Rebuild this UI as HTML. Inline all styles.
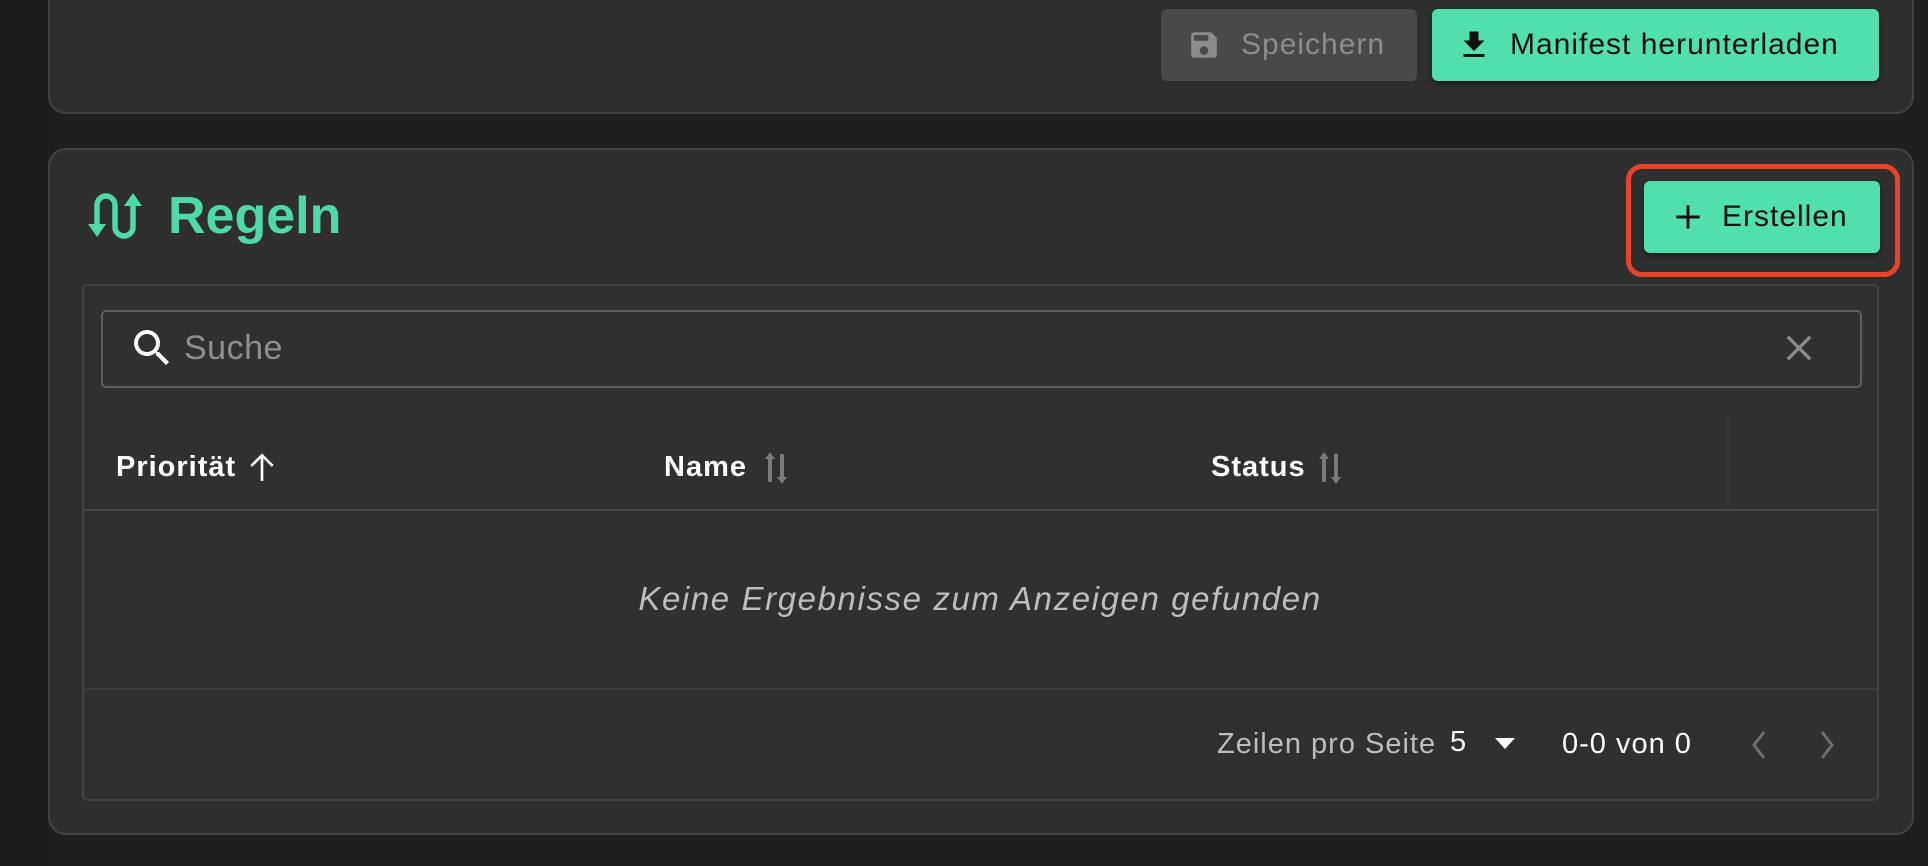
<!DOCTYPE html>
<html><head><meta charset="utf-8"><style>
*{margin:0;padding:0;box-sizing:border-box}
body{width:1928px;height:866px;background:#1f1f1f;font-family:"Liberation Sans",sans-serif;position:relative;overflow:hidden}
.abs{position:absolute}
.card{position:absolute;left:48px;width:1866px;background:#2f2f2f;border:2px solid #424242;border-radius:18px}
.btn{position:absolute;border-radius:6px;display:flex;align-items:center;font-size:30px;letter-spacing:1px}
.t{position:absolute;white-space:nowrap}
</style></head><body>
<div class="abs" style="left:0;top:0;width:48px;height:866px;background:#1b1b1b"></div>
<div class="card" style="top:-30px;height:144px"></div>
<div class="btn" style="left:1161px;top:9px;width:256px;height:72px;background:#494949;color:#8c8c8c">
 <svg style="margin-left:26px" width="34" height="36" viewBox="0 0 24 24"><path fill="#8c8c8c" d="M17 3H5a2 2 0 0 0-2 2v14a2 2 0 0 0 2 2h14a2 2 0 0 0 2-2V7l-4-4zm-5 16a3 3 0 1 1 0-6 3 3 0 0 1 0 6zm3-10H5V5h10v4z"/></svg>
 <span style="margin-left:20px">Speichern</span></div>
<div class="btn" style="left:1432px;top:9px;width:447px;height:72px;background:#50dfad;color:#111;box-shadow:0 3px 6px rgba(0,0,0,.4)">
 <svg style="margin-left:24px" width="36" height="38" viewBox="0 0 24 24"><path fill="#111" d="M19 9h-4V3H9v6H5l7 7 7-7zM5 18v2h14v-2H5z"/></svg>
 <span style="margin-left:18px">Manifest herunterladen</span></div>

<div class="card" style="top:148px;height:687px"></div>
<svg class="abs" style="left:88px;top:191px" width="58" height="50" viewBox="0 0 58 50">
 <g fill="none" stroke="#4fd8a8" stroke-width="5.5" stroke-linecap="round">
  <path d="M9 40V14a9 9 0 0 1 18 0v22a9 9 0 0 0 18 0V10"/>
 </g>
 <path fill="#4fd8a8" d="M0 33h18l-9 13z M36 15h18l-9-13z"/>
</svg>
<div class="t" style="left:168px;top:186px;font-size:52px;font-weight:bold;color:#4fd8a8">Regeln</div>

<div class="abs" style="left:1626px;top:164px;width:274px;height:113px;border:5px solid #e8432a;border-radius:16px"></div>
<div class="btn" style="left:1644px;top:181px;width:236px;height:72px;background:#50dfad;color:#111;box-shadow:0 3px 6px rgba(0,0,0,.4)">
 <svg style="margin-left:30px" width="28" height="28" viewBox="0 0 24 24"><path fill="none" stroke="#111" stroke-width="2.5" d="M12 2v20M2 12h20"/></svg>
 <span style="margin-left:20px">Erstellen</span></div>

<div class="abs" style="left:82px;top:284px;width:1797px;height:517px;background:#303030;border:2px solid #414141;border-radius:5px"></div>
<div class="abs" style="left:101px;top:310px;width:1761px;height:78px;border:2px solid #5f5f5f;border-radius:5px"></div>
<svg class="abs" style="left:128px;top:324px" width="48" height="48" viewBox="0 0 24 24"><path fill="#fff" d="M15.5 14h-.79l-.28-.27A6.470 6.470 0 0 0 16 9.5 6.5 6.5 0 1 0 9.5 16c1.61 0 3.09-.59 4.23-1.570l.27.28v.79l5 4.99L20.49 19l-4.99-5zm-6 0C7.01 14 5 11.99 5 9.5S7.01 5 9.5 5 14 7.01 14 9.5 11.99 14 9.5 14z"/></svg>
<div class="t" style="left:184px;top:329px;font-size:34px;color:#8f8f8f;letter-spacing:0.5px">Suche</div>
<svg class="abs" style="left:1782px;top:331px" width="34" height="34" viewBox="0 0 24 24"><path stroke="#8a8a8a" stroke-width="2.4" d="M4 4l16 16M20 4L4 20"/></svg>

<div class="t" style="left:116px;top:451px;font-size:29px;font-weight:bold;color:#fff;letter-spacing:1px">Priorität</div>
<svg class="abs" style="left:249px;top:452px" width="26" height="30" viewBox="0 0 24 28"><path fill="none" stroke="#fff" stroke-width="2.5" d="M12 27V3M2 13L12 3l10 10"/></svg>
<div class="t" style="left:664px;top:451px;font-size:29px;font-weight:bold;color:#fff;letter-spacing:1px">Name</div>
<svg class="abs" style="left:763px;top:452px" width="26" height="32" viewBox="0 0 26 32"><path fill="#7a7a7a" d="M7 0l5 7H9v23H5V7H2zM17 2h4v23h3l-5 7-5-7h3z"/></svg>
<div class="t" style="left:1211px;top:451px;font-size:29px;font-weight:bold;color:#fff;letter-spacing:1px">Status</div>
<svg class="abs" style="left:1317px;top:452px" width="26" height="32" viewBox="0 0 26 32"><path fill="#7a7a7a" d="M7 0l5 7H9v23H5V7H2zM17 2h4v23h3l-5 7-5-7h3z"/></svg>
<div class="abs" style="left:1727px;top:418px;width:2px;height:92px;background:#3a3a3a"></div>
<div class="abs" style="left:84px;top:509px;width:1793px;height:2px;background:#474747"></div>
<div class="t" style="left:0;width:1960px;text-align:center;top:580px;font-size:33px;font-style:italic;color:#bdbdbd;letter-spacing:1.6px">Keine Ergebnisse zum Anzeigen gefunden</div>
<div class="abs" style="left:84px;top:688px;width:1793px;height:2px;background:#3c3c3c"></div>

<div class="t" style="left:1217px;top:728px;font-size:29px;color:#bdbdbd;letter-spacing:1px">Zeilen pro Seite</div>
<div class="t" style="left:1450px;top:726px;font-size:29px;color:#fff">5</div>
<svg class="abs" style="left:1493px;top:736px" width="24" height="14" viewBox="0 0 24 14"><path fill="#fff" d="M2 2h20L12 13z"/></svg>
<div class="t" style="left:1562px;top:728px;font-size:29px;color:#fff;letter-spacing:1px">0-0 von 0</div>
<svg class="abs" style="left:1748px;top:728px" width="22" height="34" viewBox="0 0 22 34"><path fill="none" stroke="#6e6e6e" stroke-width="3" d="M16 4L6 17l10 13"/></svg>
<svg class="abs" style="left:1816px;top:728px" width="22" height="34" viewBox="0 0 22 34"><path fill="none" stroke="#6e6e6e" stroke-width="3" d="M6 4l10 13L6 30"/></svg>
</body></html>
